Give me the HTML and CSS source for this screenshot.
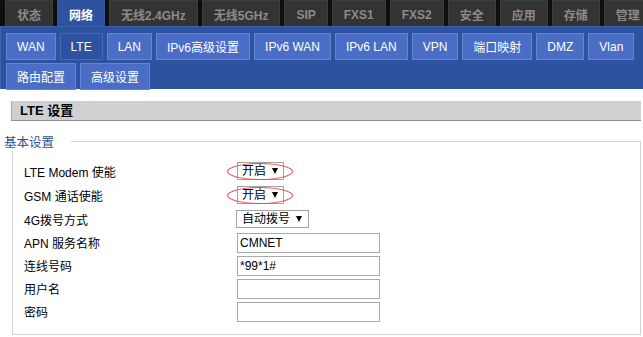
FILE: index.html
```html
<!DOCTYPE html>
<html lang="zh-CN">
<head>
    <meta charset="UTF-8">
    <title>LTE 设置</title>
    <link rel="stylesheet" href="styles.css">
</head>
<body>
    <div class="topnav">
        <a class="tab">状态</a>
        <a class="tab active">网络</a>
        <a class="tab">无线2.4GHz</a>
        <a class="tab">无线5GHz</a>
        <a class="tab">SIP</a>
        <a class="tab">FXS1</a>
        <a class="tab">FXS2</a>
        <a class="tab">安全</a>
        <a class="tab">应用</a>
        <a class="tab">存储</a>
        <a class="tab">管理</a>
    </div>

    <div class="subnav">
        <a class="btn">WAN</a>
        <a class="btn active">LTE</a>
        <a class="btn">LAN</a>
        <a class="btn">IPv6高级设置</a>
        <a class="btn">IPv6 WAN</a>
        <a class="btn">IPv6 LAN</a>
        <a class="btn">VPN</a>
        <a class="btn">端口映射</a>
        <a class="btn">DMZ</a>
        <a class="btn">Vlan</a>
        <a class="btn">路由配置</a>
        <a class="btn">高级设置</a>
    </div>

    <div class="content">
        <div class="section-title">LTE 设置</div>

        <fieldset class="group">
            <legend>基本设置</legend>
            <div class="form">
                <div class="form-row sel">
                    <label>LTE Modem 使能</label>
                    <span class="select-wrap marked">
                        <select class="select"><option>开启</option><option>关闭</option></select>
                    </span>
                </div>
                <div class="form-row sel">
                    <label>GSM 通话使能</label>
                    <span class="select-wrap marked">
                        <select class="select"><option>开启</option><option>关闭</option></select>
                    </span>
                </div>
                <div class="form-row sel">
                    <label>4G拨号方式</label>
                    <span class="select-wrap wide">
                        <select class="select"><option>自动拨号</option><option>手动拨号</option></select>
                    </span>
                </div>
                <div class="form-row">
                    <label>APN 服务名称</label>
                    <input class="input" type="text" value="CMNET">
                </div>
                <div class="form-row">
                    <label>连线号码</label>
                    <input class="input" type="text" value="*99*1#">
                </div>
                <div class="form-row">
                    <label>用户名</label>
                    <input class="input" type="text" value="">
                </div>
                <div class="form-row">
                    <label>密码</label>
                    <input class="input" type="password" value="">
                </div>
            </div>
        </fieldset>
    </div>
</body>
</html>
```

FILE: styles.css
```css
body {
    margin: 0;
    font-family: 'Liberation Sans', 'Noto Sans CJK SC', sans-serif;
    font-size: 12px;
    color: #000;
    background-color: #fff;
}
.topnav {
    display: flex;
    gap: 4px;
    height: 26px;
    padding-left: 5px;
    background-color: #0e0e0e;
    overflow: hidden;
}
.tab {
    display: flex;
    align-items: center;
    flex-shrink: 0;
    padding: 2px 11px 0;
    border: 1px solid #3e3e3e;
    border-bottom: none;
    background-color: #333;
    color: #8b8b8b;
    font-weight: bold;
}
.tab.active {
    background-color: #2d529f;
    border-color: #2d529f;
    color: #fff;
}
.subnav {
    display: flex;
    flex-wrap: wrap;
    gap: 3px 4px;
    height: 56px;
    padding: 6px 0 0 5px;
    background-color: #2d529f;
    border-top: 1px solid #3b60b0;
    border-left: 1px solid #3f63b3;
}
.btn {
    display: flex;
    align-items: center;
    height: 25px;
    padding: 0 10px;
    border: 1px solid #6285d3;
    background-color: #4a6ec5;
    color: #fff;
}
.btn.active {
    background-color: #2d529f;
    border-color: #4868b9;
}
.content {
    padding: 12px 2px 0 11px;
}
.section-title {
    height: 19px;
    line-height: 20px;
    padding-left: 8px;
    background-color: #d0d0d0;
    border-left: 1px solid #a8a8a8;
    border-bottom: 1px solid #8f8f8f;
    font-size: 13px;
    font-weight: bold;
}
.group {
    margin: 11px 0 0 1px;
    padding: 0 0 11px 11px;
    border: 1px solid #d3d3d3;
}
.group legend {
    margin-left: -20px;
    padding: 0 17px 0 0;
    color: #2b5497;
    font-size: 12.5px;
}
.form {
    padding-top: 8px;
}
.form-row {
    display: flex;
    align-items: center;
    height: 23px;
}
.form-row.sel {
    height: 24px;
}
.form-row label {
    width: 213px;
}
.select-wrap {
    position: relative;
    display: inline-block;
}
.select-wrap::after {
    content: "";
    position: absolute;
    right: 6px;
    top: 6px;
    border-left: 3px solid transparent;
    border-right: 3px solid transparent;
    border-top: 6px solid #000;
    pointer-events: none;
}
.select {
    appearance: none;
    width: 47px;
    height: 18px;
    margin: 0;
    padding: 0 0 0 4px;
    border: 1px solid #a3a3a3;
    border-radius: 0;
    background-color: #fff;
    font-family: inherit;
    font-size: 12px;
    color: #000;
}
.select-wrap.wide {
    margin-left: -1px;
}
.select-wrap.wide .select {
    width: 73px;
    padding-left: 5px;
}
.select-wrap.wide::after {
    right: 7px;
}
.marked::before {
    content: "";
    position: absolute;
    left: -10px;
    right: -9px;
    top: 1px;
    bottom: 0;
    border: 1px solid #e5484d;
    border-radius: 50%;
    z-index: 1;
    pointer-events: none;
}
.input {
    box-sizing: border-box;
    width: 143px;
    height: 20px;
    margin: 0;
    padding: 0 2px;
    border: 1px solid #a9a9a9;
    font-family: inherit;
    font-size: 12px;
    color: #000;
}
```
